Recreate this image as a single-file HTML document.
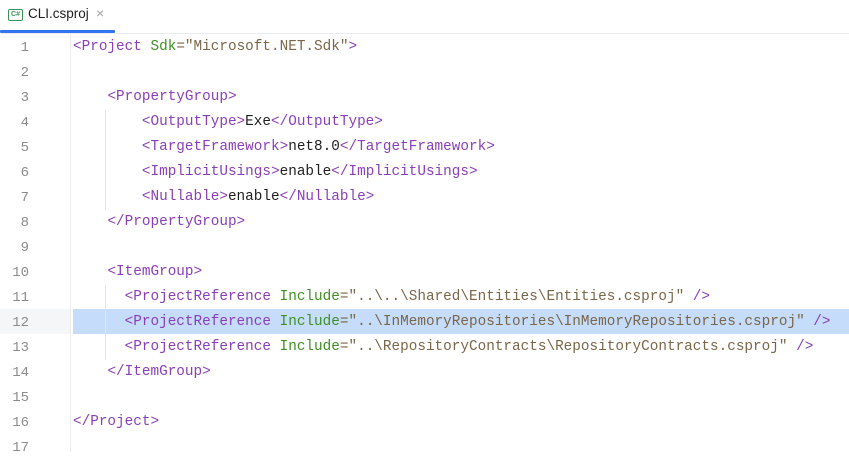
<!DOCTYPE html>
<html><head><meta charset="utf-8"><style>
body{margin:0;width:849px;height:452px;overflow:hidden;background:#fff;font-family:"Liberation Sans",sans-serif;position:relative}
.tabbar{position:absolute;left:0;top:0;width:849px;height:33px;border-bottom:1px solid #ebecf0;background:#fff}
.tabline{position:absolute;left:0;top:30px;width:115px;height:3px;background:#3574f0;border-radius:1px}
.icon{position:absolute;left:8px;top:9px;width:13px;height:10px;border:1.3px solid #3d8f58;border-radius:2px;font:bold 7px "Liberation Sans",sans-serif;color:#3d8f58;text-align:center;line-height:10px}
.tabtext{position:absolute;left:28px;top:6px;font-size:13.5px;color:#1f1f1f}
.close{position:absolute;left:96px;top:5px;font-size:14px;color:#a0a0a0}
.sep{position:absolute;left:70px;top:34px;width:1px;height:418px;background:#ebecf0}
.hlg{position:absolute;left:0;top:309px;width:70px;height:25px;background:#f5f6f8}
.hl{position:absolute;left:73px;top:309px;width:776px;height:25px;background:#c5dcfb}
.guide{position:absolute;width:1px;background:#e4e4e4}
.ln{position:absolute;left:0;width:29px;text-align:right;font:14px "Liberation Mono",monospace;color:#8c8c8c}
.code{position:absolute;left:73px;font:14.35px "Liberation Mono",monospace;white-space:pre;color:#1f1f1f}
.t{color:#8a3fb8}.a{color:#3f8f24}.s{color:#7a6648}
</style></head><body>
<div class="tabbar"><div class="icon">C#</div><div class="tabtext">CLI.csproj</div><div class="close">×</div><div class="tabline"></div></div>
<div class="sep"></div>
<div class="hlg"></div><div class="hl"></div>
<div class="guide" style="left:105px;top:110px;height:100px"></div>
<div class="guide" style="left:105px;top:285px;height:75px"></div>
<div class="ln" style="top:40px">1</div>
<div class="ln" style="top:65px">2</div>
<div class="ln" style="top:90px">3</div>
<div class="ln" style="top:115px">4</div>
<div class="ln" style="top:140px">5</div>
<div class="ln" style="top:165px">6</div>
<div class="ln" style="top:190px">7</div>
<div class="ln" style="top:215px">8</div>
<div class="ln" style="top:240px">9</div>
<div class="ln" style="top:265px">10</div>
<div class="ln" style="top:290px">11</div>
<div class="ln" style="top:315px">12</div>
<div class="ln" style="top:340px">13</div>
<div class="ln" style="top:365px">14</div>
<div class="ln" style="top:390px">15</div>
<div class="ln" style="top:415px">16</div>
<div class="ln" style="top:440px">17</div>
<div class="code" style="top:39px"><span class="t">&lt;Project </span><span class="a">Sdk</span><span class="s">="Microsoft.NET.Sdk"</span><span class="t">&gt;</span></div>
<div class="code" style="top:89px">    <span class="t">&lt;PropertyGroup&gt;</span></div>
<div class="code" style="top:114px">        <span class="t">&lt;OutputType&gt;</span>Exe<span class="t">&lt;/OutputType&gt;</span></div>
<div class="code" style="top:139px">        <span class="t">&lt;TargetFramework&gt;</span>net8.0<span class="t">&lt;/TargetFramework&gt;</span></div>
<div class="code" style="top:164px">        <span class="t">&lt;ImplicitUsings&gt;</span>enable<span class="t">&lt;/ImplicitUsings&gt;</span></div>
<div class="code" style="top:189px">        <span class="t">&lt;Nullable&gt;</span>enable<span class="t">&lt;/Nullable&gt;</span></div>
<div class="code" style="top:214px">    <span class="t">&lt;/PropertyGroup&gt;</span></div>
<div class="code" style="top:264px">    <span class="t">&lt;ItemGroup&gt;</span></div>
<div class="code" style="top:289px">      <span class="t">&lt;ProjectReference </span><span class="a">Include</span><span class="s">="..\..\Shared\Entities\Entities.csproj"</span><span class="t"> /&gt;</span></div>
<div class="code" style="top:314px">      <span class="t">&lt;ProjectReference </span><span class="a">Include</span><span class="s">="..\InMemoryRepositories\InMemoryRepositories.csproj"</span><span class="t"> /&gt;</span></div>
<div class="code" style="top:339px">      <span class="t">&lt;ProjectReference </span><span class="a">Include</span><span class="s">="..\RepositoryContracts\RepositoryContracts.csproj"</span><span class="t"> /&gt;</span></div>
<div class="code" style="top:364px">    <span class="t">&lt;/ItemGroup&gt;</span></div>
<div class="code" style="top:414px"><span class="t">&lt;/Project&gt;</span></div>
</body></html>
